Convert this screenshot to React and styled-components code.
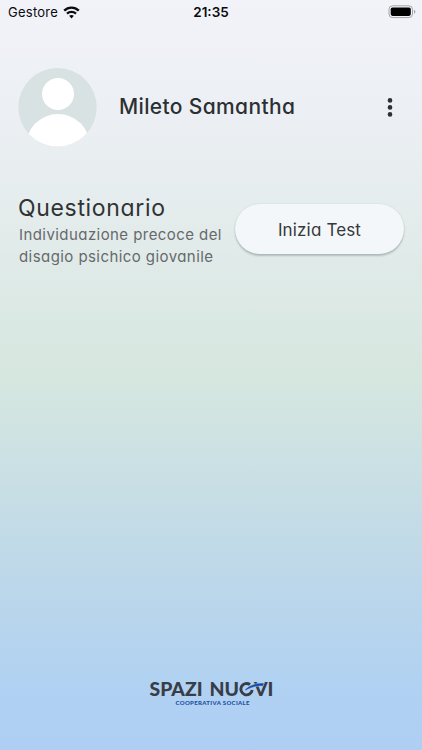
import styled, { createGlobalStyle } from "styled-components";

const GlobalStyle = createGlobalStyle`
  * {
    box-sizing: border-box;
  }
  body {
    margin: 0;
    font-family: "Inter", "Open Sans", sans-serif;
    /* single-storey "a" for a more geometric look */
    font-feature-settings: "cv11" 1;
  }
`;

const Container = styled.div`
  width: 100%;
  height: 100vh;
  display: flex;
  flex-direction: column;
  overflow: hidden;
  background: linear-gradient(180deg, #f2f3f9 0%, #e9eef1 21%, #d6e7df 50%, #bcd7ea 78%, #b0d1f2 92%, #aecff3 100%);
`;

const StatusBar = styled.div`
  height: 24px;
  padding: 0 6px 0 8px;
  display: grid;
  grid-template-columns: 1fr auto 1fr;
  align-items: center;
  color: #0b0b0d;
`;

const Carrier = styled.div`
  display: flex;
  align-items: center;
  gap: 5px;
  font-size: 13px;
  letter-spacing: 0.25px;
  font-feature-settings: normal;
`;

const Clock = styled.div`
  font-size: 13.5px;
  font-weight: 600;
  padding-right: 2px;
`;

const Battery = styled.svg`
  justify-self: end;
  margin-top: -1px;
`;

const Header = styled.header`
  margin-top: 44px;
  padding: 0 26px 0 18px;
  display: flex;
  align-items: center;
`;

const Avatar = styled.svg`
  flex: none;
`;

const Name = styled.h1`
  flex: 1;
  margin: -1px 0 0 22px;
  font-size: 21px;
  line-height: 28px;
  font-weight: 520;
  letter-spacing: 0.36px;
  color: #2d3033;
`;

const MenuButton = styled.button`
  display: flex;
  padding: 0;
  border: none;
  background: none;
`;

const Card = styled.section`
  margin-top: 45px;
  padding: 0 18px;
  display: flex;
  justify-content: space-between;
`;

const Info = styled.div`
  flex: none;
  padding-top: 1px;
`;

const Title = styled.h2`
  margin: 0;
  font-size: 23px;
  line-height: 30px;
  font-weight: 380;
  letter-spacing: 0.66px;
  color: #303335;
`;

const Desc = styled.p`
  margin: 1px 0 0 1px;
  font-size: 15px;
  line-height: 21.5px;
  letter-spacing: 0.43px;
  color: #66696b;
  white-space: nowrap;
`;

const Button = styled.button`
  width: 169px;
  height: 50px;
  margin-top: 12px;
  padding: 1px 0 0;
  border: none;
  border-radius: 25px;
  background-color: #f3f7f9;
  box-shadow: 0 2px 2px rgba(60, 75, 75, 0.28), 0 0 2px rgba(60, 75, 75, 0.12);
  font-family: inherit;
  font-feature-settings: inherit;
  font-size: 17px;
  letter-spacing: 0.15px;
  color: #36393b;
`;

const Footer = styled.footer`
  margin-top: auto;
  padding-bottom: 38px;
  display: flex;
  justify-content: center;
`;

const Logo = () => {
  return (
    <svg width="130" height="38" viewBox="-2 -6 130 38">
      <g fontFamily="Lato, sans-serif" fontWeight="900">
        <text x="1.5" y="16" fontSize="18.5" textLength="53" lengthAdjust="spacingAndGlyphs" fill="#383d47">SPAZI</text>
        <text x="61.5" y="16" fontSize="18.5" textLength="29.5" lengthAdjust="spacingAndGlyphs" fill="#383d47">NU</text>
        <text x="106" y="16" fontSize="18.5" textLength="19.5" lengthAdjust="spacingAndGlyphs" fill="#383d47">VI</text>
        <text x="27.5" y="25" fontSize="6" textLength="74" fill="#1d4fa3">COOPERATIVA SOCIALE</text>
      </g>
      {/* open ring with the blue brush stroke across it */}
      <path d="M102 4.6A5.7 5.7 0 1 0 104.2 10" fill="none" stroke="#383d47" strokeWidth="2.9" />
      <path d="M97 9.6C101 5.4 108 2.4 116.2 3.2L115 6.2C108 5.6 102.6 7.6 97.4 10.8Z" fill="#154ba5" stroke="#b1d1f2" strokeWidth="0.5" />
    </svg>
  );
};

const App = () => {
  return (
    <Container>
      <GlobalStyle />
      <StatusBar>
        <Carrier>
          Gestore
          <svg width="17" height="13" viewBox="0 0 17 13" fill="none" stroke="currentColor" strokeWidth="2.4">
            <path d="M1.2 4.6C5.3.6 11.7.6 15.8 4.6" />
            <path d="M4 7.6C6.5 5.3 10.5 5.3 13 7.6" />
            <path d="M8.5 12.4L6.1 9.8Q8.5 8 10.9 9.8Z" fill="currentColor" stroke="none" />
          </svg>
        </Carrier>
        <Clock>21:35</Clock>
        <Battery width="28" height="14" viewBox="0 0 28 14">
          <rect x="1" y="0.8" width="23.5" height="11.8" rx="3.6" fill="none" stroke="#a3a4a9" />
          <rect x="2.7" y="2.5" width="20.1" height="8.4" rx="1.8" fill="#000" />
          <path d="M26 4.8V8.8Q27.4 8.4 27.4 6.8T26 4.8Z" fill="#a3a4a9" />
        </Battery>
      </StatusBar>

      <Header>
        <Avatar width="79" height="79" viewBox="0 0 79 79">
          <clipPath id="avatar">
            <circle cx="39.5" cy="39.3" r="39.2" />
          </clipPath>
          <g clipPath="url(#avatar)">
            <rect width="79" height="79" fill="#d8e2e3" />
            <circle cx="40" cy="26" r="16" fill="#fff" />
            <ellipse cx="40" cy="78" rx="32" ry="32" fill="#fff" />
          </g>
        </Avatar>
        <Name>Mileto Samantha</Name>
        <MenuButton aria-label="Menu">
          <svg width="12" height="20" viewBox="0 0 12 20" fill="#2d3033">
            <circle cx="6" cy="2.4" r="2.3" />
            <circle cx="6" cy="9.4" r="2.3" />
            <circle cx="6" cy="16.4" r="2.3" />
          </svg>
        </MenuButton>
      </Header>

      <Card>
        <Info>
          <Title>Questionario</Title>
          <Desc>
            Individuazione precoce del
            <br />
            disagio psichico giovanile
          </Desc>
        </Info>
        <Button>Inizia Test</Button>
      </Card>

      <Footer>
        <Logo />
      </Footer>
    </Container>
  );
};

export default App;
